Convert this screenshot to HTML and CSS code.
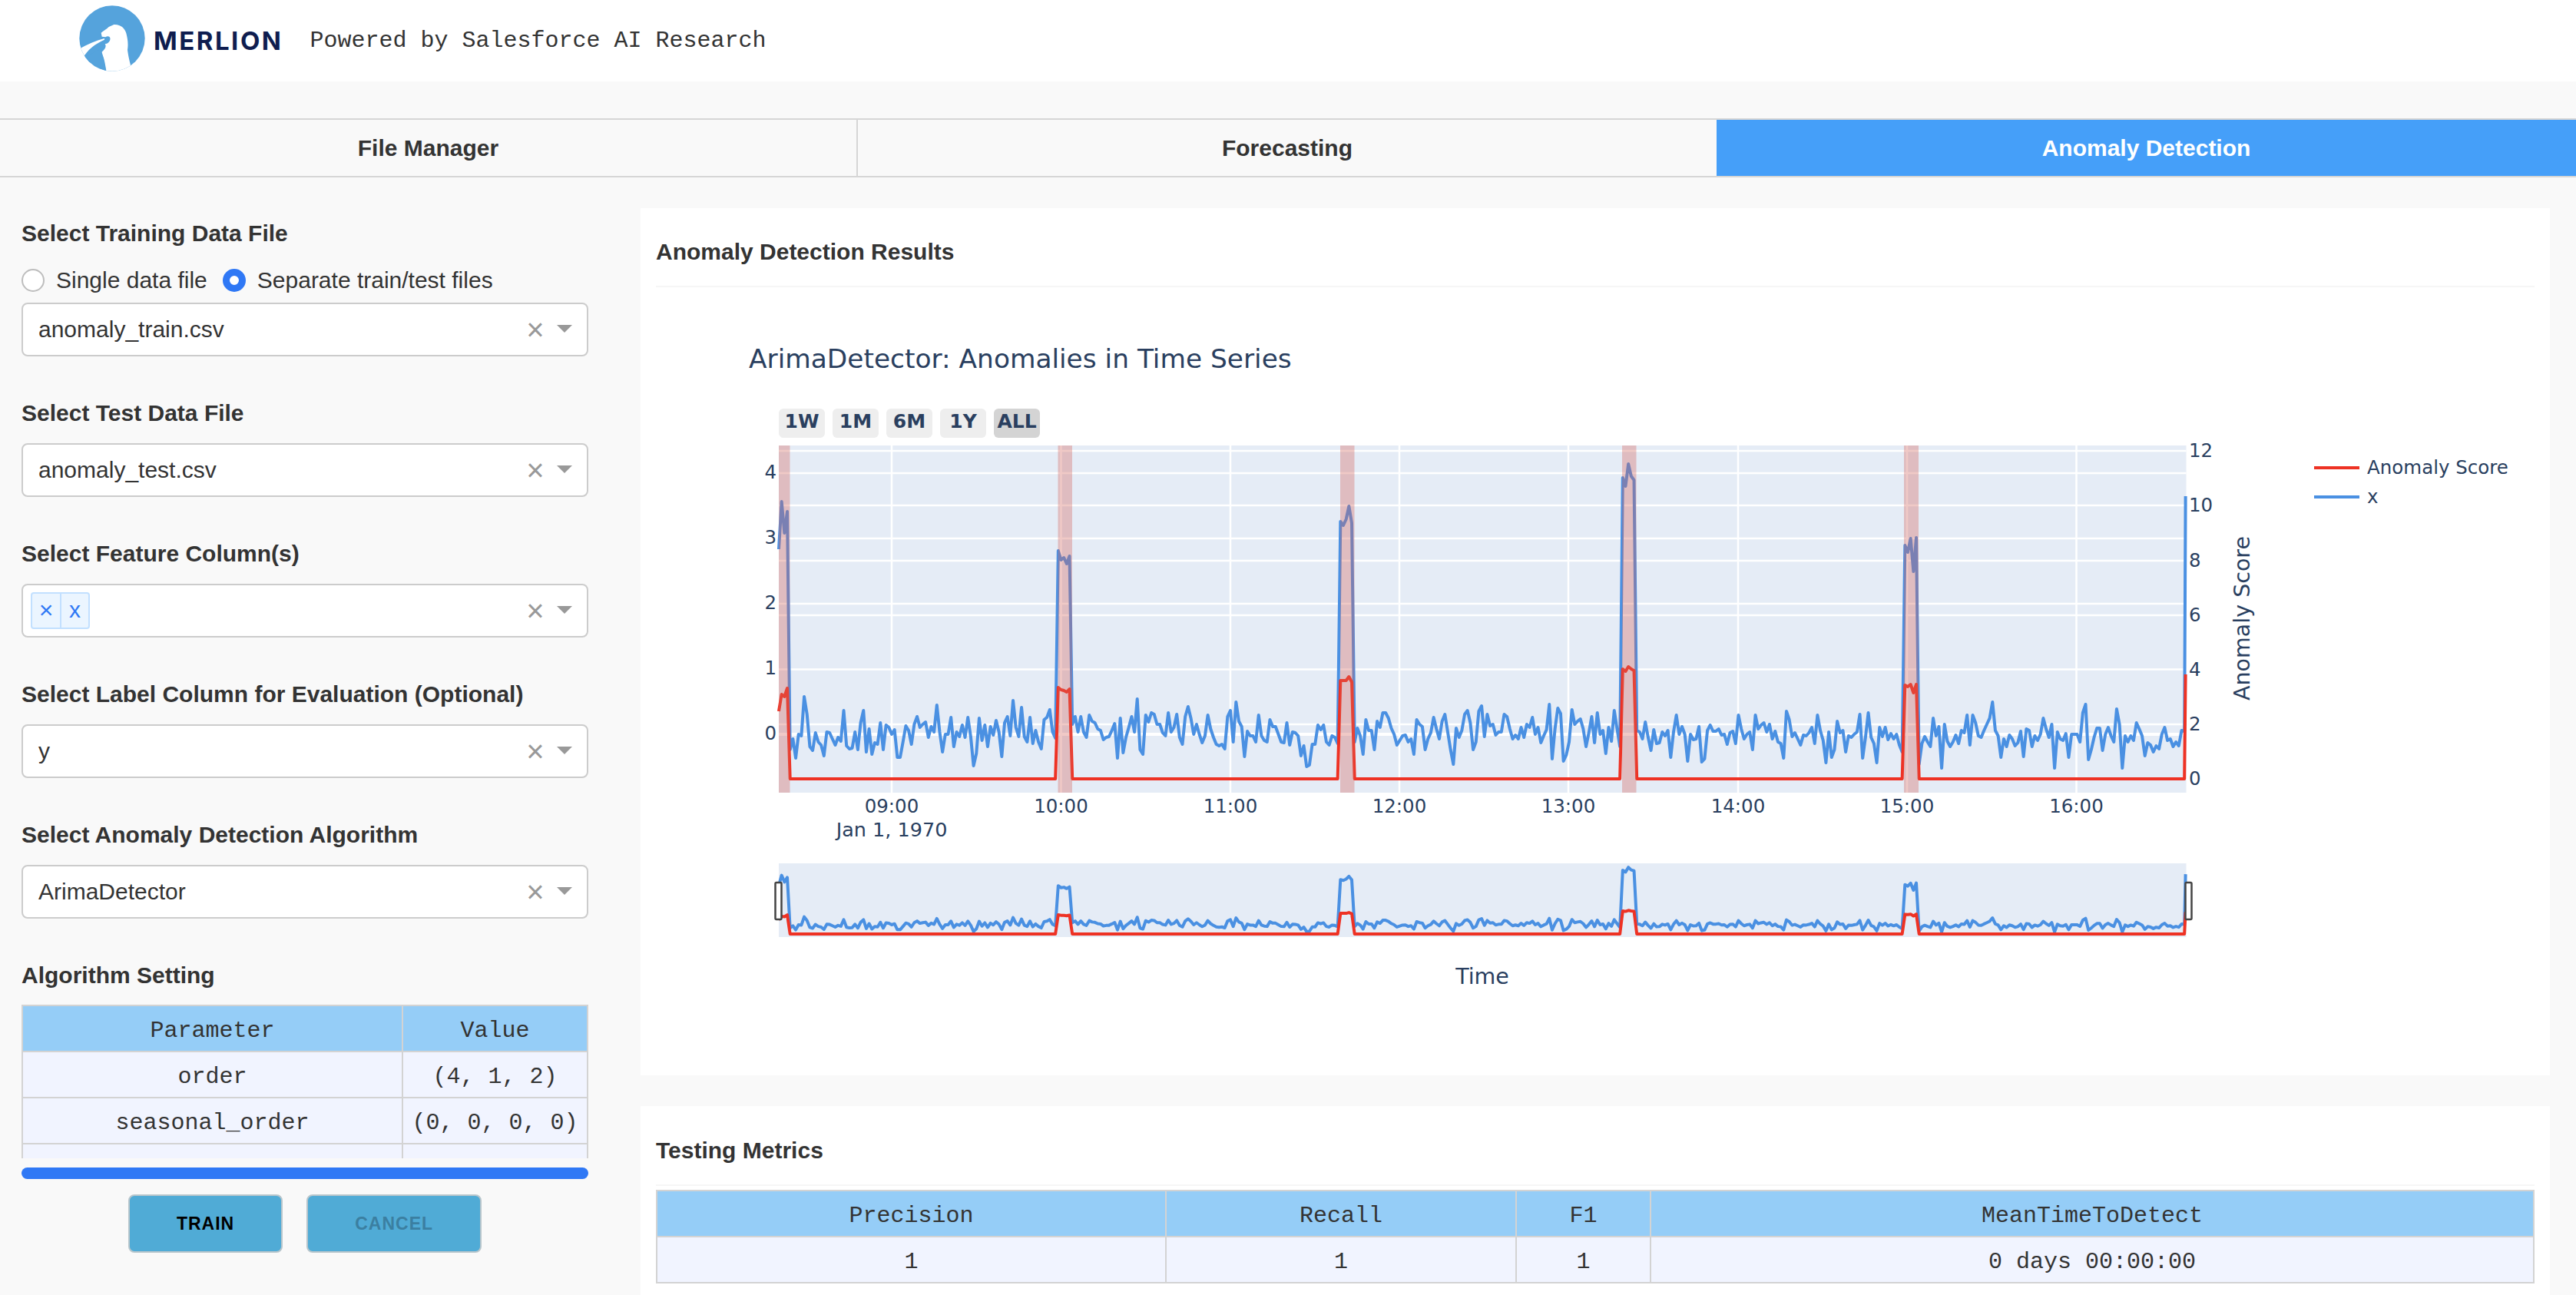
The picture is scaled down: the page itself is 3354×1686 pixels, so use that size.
FILE: index.html
```html
<!DOCTYPE html>
<html lang="en">
<head>
<meta charset="utf-8">
<title>Merlion</title>
<link rel="stylesheet" href="styles.css">
</head>
<body>
<header class="banner">
  <svg class="logo-mark" viewBox="60 15 276 270" aria-hidden="true">
    <defs><clipPath id="disc"><circle cx="198" cy="150" r="128"/></clipPath></defs>
    <circle cx="198" cy="150" r="128" fill="#55a3dc"/>
    <g clip-path="url(#disc)" fill="#fff">
      <path d="M205 96C230 94 248 110 253 130C258 150 262 170 258 195C262 225 268 245 272 262L280 300H172L175 275C170 250 168 225 155 205C168 195 178 182 170 172C185 170 192 158 190 148C188 140 178 140 172 145L158 143L155 128C165 120 175 115 185 105Z"/>
      <path d="M168 150C130 160 95 175 60 197L84 228C100 195 130 172 168 155Z"/>
      <path d="M155 190L84 228L175 280Z" fill="#55a3dc"/>
    </g>
  </svg>
  <span class="logo-word">MERLION</span>
  <span class="tagline">Powered by Salesforce AI Research</span>
</header>

<nav class="tabs">
  <div class="tab tab-first">File Manager</div>
  <div class="tab tab-mid">Forecasting</div>
  <div class="tab tab-active">Anomaly Detection</div>
</nav>

<main class="layout">
  <aside class="controls">
    <section class="group">
      <h3 class="label label-tight">Select Training Data File</h3>
      <div class="radios">
        <span class="radio"></span><span class="radio-text">Single data file</span>
        <span class="radio radio-on"></span><span class="radio-text">Separate train/test files</span>
      </div>
      <div class="select"><span class="select-value">anomaly_train.csv</span><span class="clear">×</span><span class="arrow"></span></div>
    </section>
    <section class="group">
      <h3 class="label">Select Test Data File</h3>
      <div class="select"><span class="select-value">anomaly_test.csv</span><span class="clear">×</span><span class="arrow"></span></div>
    </section>
    <section class="group">
      <h3 class="label">Select Feature Column(s)</h3>
      <div class="select select-multi">
        <span class="chip"><span class="chip-x">×</span><span class="chip-text">x</span></span>
        <span class="select-value"></span><span class="clear">×</span><span class="arrow"></span>
      </div>
    </section>
    <section class="group">
      <h3 class="label">Select Label Column for Evaluation (Optional)</h3>
      <div class="select"><span class="select-value">y</span><span class="clear">×</span><span class="arrow"></span></div>
    </section>
    <section class="group">
      <h3 class="label">Select Anomaly Detection Algorithm</h3>
      <div class="select"><span class="select-value">ArimaDetector</span><span class="clear">×</span><span class="arrow"></span></div>
    </section>
    <section class="group">
      <h3 class="label label-table">Algorithm Setting</h3>
      <div class="param-scroll">
        <table class="data-table param-table">
          <colgroup><col class="col-param"><col></colgroup>
          <thead><tr><th>Parameter</th><th>Value</th></tr></thead>
          <tbody>
            <tr><td>order</td><td>(4, 1, 2)</td></tr>
            <tr><td>seasonal_order</td><td>(0, 0, 0, 0)</td></tr>
            <tr><td>&nbsp;</td><td>&nbsp;</td></tr>
          </tbody>
        </table>
      </div>
      <div class="progress"></div>
      <div class="actions">
        <button class="btn" type="button">TRAIN</button>
        <button class="btn btn-muted" type="button">CANCEL</button>
      </div>
    </section>
  </aside>

  <div class="results">
    <section class="card card-chart">
      <h3 class="card-title">Anomaly Detection Results</h3>
      <hr class="rule">
      <svg class="chart" viewBox="854 373 2446 1026" role="img" aria-label="Anomalies in time series chart">
        <defs>
          <polyline id="series-x" class="trace" points="0,714 1,652 2,693 3,665 4,975 5,961 6,986 7,955 8,957 9,906 10,929 11,971 12,976 13,953 14,965 15,969 16,983 17,952 18,953 19,961 20,969 21,959 22,964 23,924 24,970 25,974 26,973 27,952 28,975 29,940 30,924 31,978 32,948 33,981 34,966 35,968 36,940 37,975 38,943 39,946 40,955 41,949 42,985 43,985 44,965 45,944 46,950 47,968 48,942 49,932 50,946 51,942 52,939 53,959 54,945 55,952 56,917 57,952 58,978 59,955 60,955 61,933 62,971 63,952 64,958 65,943 66,959 67,933 68,958 69,996 70,980 71,934 72,963 73,943 74,971 75,945 76,956 77,937 78,952 79,984 80,940 81,932 82,957 83,911 84,946 85,958 86,920 87,958 88,965 89,933 90,967 91,950 92,965 93,974 94,936 95,933 96,923 97,952 98,960 99,716 100,728 101,725 102,733 103,723 104,942 105,932 106,952 107,932 108,952 109,959 110,930 111,938 112,940 113,948 114,950 115,962 116,959 117,958 118,950 119,941 120,986 121,934 122,979 123,959 124,946 125,932 126,952 127,909 128,975 129,981 130,930 131,939 132,927 133,929 134,942 135,942 136,953 137,957 138,927 139,952 140,946 141,929 142,959 143,968 144,932 145,919 146,934 147,955 148,942 149,955 150,966 151,957 152,930 153,948 154,959 155,968 156,970 157,968 158,974 159,932 160,924 161,965 162,913 163,938 164,945 165,984 166,951 167,957 168,957 169,965 170,930 171,957 172,963 173,965 174,936 175,945 176,945 177,955 178,965 179,966 180,940 181,969 182,952 183,953 184,957 185,983 186,970 187,997 188,995 189,968 190,968 191,943 192,949 193,943 194,965 195,969 196,957 197,959 198,967 199,678 200,683 201,675 202,658 203,680 204,965 205,947 206,957 207,981 208,936 209,950 210,950 211,975 212,938 213,946 214,927 215,927 216,934 217,947 218,955 219,969 220,963 221,957 222,956 223,965 224,961 225,981 226,936 227,942 228,945 229,975 230,961 231,953 232,933 233,948 234,961 235,938 236,929 237,952 238,975 239,994 240,947 241,959 242,950 243,929 244,924 245,940 246,975 247,965 248,925 249,918 250,958 251,929 252,944 253,942 254,956 255,952 256,952 257,929 258,932 259,948 260,961 261,956 262,961 263,946 264,959 265,942 266,946 267,933 268,955 269,946 270,966 271,957 272,949 273,916 274,987 275,948 276,921 277,928 278,990 279,982 280,965 281,923 282,942 283,938 284,935 285,948 286,971 287,953 288,932 289,966 290,927 291,955 292,950 293,980 294,946 295,964 296,924 297,948 298,971 299,621 300,632 301,603 302,619 303,624 304,950 305,952 306,961 307,939 308,959 309,976 310,949 311,967 312,966 313,952 314,957 315,950 316,985 317,952 318,930 319,955 320,945 321,955 322,990 323,955 324,962 325,961 326,945 327,991 328,987 329,950 330,943 331,951 332,951 333,948 334,956 335,955 336,968 337,953 338,951 339,967 340,930 341,948 342,961 343,955 344,952 345,975 346,930 347,948 348,943 349,940 350,952 351,942 352,961 353,951 354,965 355,967 356,986 357,925 358,936 359,958 360,953 361,961 362,969 363,956 364,957 365,953 366,946 367,967 368,930 369,950 370,963 371,992 372,952 373,985 374,975 375,938 376,953 377,950 378,978 379,957 380,959 381,955 382,952 383,929 384,986 385,959 386,927 387,959 388,967 389,992 390,946 391,958 392,946 393,962 394,954 395,961 396,955 397,969 398,978 399,709 400,718 401,700 402,743 403,699 404,994 405,967 406,958 407,965 408,971 409,934 410,957 411,945 412,999 413,942 414,964 415,971 416,965 417,956 418,967 419,950 420,953 421,930 422,969 423,930 424,940 425,957 426,959 427,950 428,942 429,934 430,913 431,950 432,957 433,985 434,961 435,971 436,956 437,961 438,970 439,966 440,951 441,984 442,948 443,950 444,971 445,957 446,963 447,955 448,934 449,948 450,959 451,942 452,999 453,952 454,961 455,963 456,954 457,985 458,955 459,955 460,955 461,965 462,927 463,916 464,988 465,975 466,959 467,947 468,947 469,976 470,955 471,946 472,957 473,965 474,922 475,942 476,999 477,957 478,965 479,957 480,963 481,940 482,948 483,957 484,983 485,966 486,969 487,978 488,970 489,974 490,955 491,946 492,963 493,961 494,971 495,965 496,970 497,950 498,951 498.4,645"/>
          <polyline id="series-score" class="trace" points="0,925 1,903 2,906 3,895 4,1013 98,1013 99,894 100,897 101,898 102,900 103,896 104,1013 198,1013 199,885 200,885 201,885 202,880 203,887 204,1013 298,1013 299,870 300,873 301,867 302,870 303,872 304,1013 398,1013 399,891 400,893 401,890 402,901 403,890 404,1013 498,1013 498.4,877"/>
        </defs>

        <text class="chart-title" x="975" y="478">ArimaDetector: Anomalies in Time Series</text>

        <g class="range-buttons">
          <rect class="range-btn" x="1014" y="531" width="60" height="38" rx="6"/><text class="range-label" x="1044" y="556">1W</text>
          <rect class="range-btn" x="1084" y="531" width="60" height="38" rx="6"/><text class="range-label" x="1114" y="556">1M</text>
          <rect class="range-btn" x="1154" y="531" width="60" height="38" rx="6"/><text class="range-label" x="1184" y="556">6M</text>
          <rect class="range-btn" x="1224" y="531" width="60" height="38" rx="6"/><text class="range-label" x="1254" y="556">1Y</text>
          <rect class="range-btn range-btn-on" x="1294" y="531" width="60" height="38" rx="6"/><text class="range-label" x="1324" y="556">ALL</text>
        </g>

        <rect class="plot-bg" x="1014" y="579" width="1832.5" height="452"/>
        <path class="grid" d="M1161 579V1031M1381.5 579V1031M1602 579V1031M1822 579V1031M2042 579V1031M2263 579V1031M2483 579V1031M2703.5 579V1031"/>
        <path class="grid" d="M1014 586H2846.5M1014 615H2846.5M1014 657H2846.5M1014 700H2846.5M1014 729H2846.5M1014 785H2846.5M1014 800H2846.5M1014 870.500H2846.5M1014 942H2846.5"/>
        <path class="grid-zero" d="M1014 955H2846.5"/>

        <use href="#series-x" class="stroke-x" transform="translate(1014 0) scale(3.675 1)"/>
        <use href="#series-score" class="stroke-score" transform="translate(1014 0) scale(3.675 1)"/>

        <rect class="band" x="1014" y="579" width="14.500" height="452"/>
        <rect class="band" x="1377.500" y="579" width="18.500" height="452"/>
        <rect class="band" x="1745" y="579" width="18.500" height="452"/>
        <rect class="band" x="2112" y="579" width="18.500" height="452"/>
        <rect class="band" x="2479" y="579" width="19" height="452"/>

        <g class="tick tick-end">
          <text x="1011" y="622">4</text><text x="1011" y="707">3</text><text x="1011" y="792">2</text><text x="1011" y="877">1</text><text x="1011" y="962">0</text>
        </g>
        <g class="tick">
          <text x="2850" y="594">12</text><text x="2850" y="665">10</text><text x="2850" y="737">8</text><text x="2850" y="808">6</text><text x="2850" y="879">4</text><text x="2850" y="950">2</text><text x="2850" y="1021">0</text>
        </g>
        <g class="tick tick-mid">
          <text x="1161" y="1057">09:00</text><text class="tick-date" x="1161" y="1088">Jan 1, 1970</text>
          <text x="1381.500" y="1057">10:00</text><text x="1602" y="1057">11:00</text><text x="1822" y="1057">12:00</text><text x="2042" y="1057">13:00</text><text x="2263" y="1057">14:00</text><text x="2483" y="1057">15:00</text><text x="2703.500" y="1057">16:00</text>
        </g>

        <text class="axis-title" transform="translate(2929 804) rotate(-90)">Anomaly Score</text>
        <text class="axis-title" x="1930" y="1280">Time</text>

        <path class="legend-score" d="M3013 608H3072"/>
        <path class="legend-x" d="M3013 646H3072"/>
        <text class="tick" x="3082" y="616">Anomaly Score</text>
        <text class="tick" x="3082" y="654">x</text>

        <rect class="plot-bg" x="1014" y="1123" width="1832.5" height="96"/>
        <use href="#series-x" class="stroke-x" transform="translate(1014 1000.06) scale(3.675 .2125)"/>
        <use href="#series-score" class="stroke-score" transform="translate(1014 1002.27) scale(3.675 .21)"/>
        <rect class="grip" x="1009.500" y="1148" width="8" height="48" rx="1.500"/>
        <rect class="grip" x="2845.500" y="1148" width="8" height="48" rx="1.500"/>
      </svg>
    </section>

    <section class="card card-metrics">
      <h3 class="card-title card-title-metrics">Testing Metrics</h3>
      <hr class="rule rule-table">
      <table class="data-table metrics-table">
        <colgroup><col class="col-a"><col class="col-b"><col class="col-c"><col></colgroup>
        <thead><tr><th>Precision</th><th>Recall</th><th>F1</th><th>MeanTimeToDetect</th></tr></thead>
        <tbody><tr><td>1</td><td>1</td><td>1</td><td>0 days 00:00:00</td></tr></tbody>
      </table>
    </section>
  </div>
</main>
</body>
</html>
```
FILE: styles.css
```css
* { box-sizing: border-box; }
html, body { margin: 0; height: 100%; }
body {
  overflow: hidden;
  background: #f9f9f9;
  color: #333;
  font-family: "Liberation Sans", Arial, sans-serif;
}

.banner {
  display: flex;
  align-items: center;
  height: 106px;
  padding-left: 100px;
  background: #fff;
}
.logo-mark { display: block; width: 92px; height: 90px; margin-top: -6px; }
.logo-word {
  margin-left: 8px;
  font-family: Inter, "Liberation Sans", sans-serif;
  font-size: 33px;
  font-weight: 700;
  letter-spacing: 2.500px;
  color: #0f1d4f;
}
.tagline {
  margin-left: 35px;
  font-family: "Liberation Mono", monospace;
  font-size: 30px;
  color: #333;
}

.tabs {
  display: flex;
  height: 77px;
  margin-top: 48px;
  border-top: 2px solid #d6d6d6;
  border-bottom: 2px solid #d6d6d6;
}
.tab {
  display: flex;
  align-items: center;
  justify-content: center;
  font-size: 30px;
  font-weight: 700;
  color: #333;
}
.tab-first { flex: 0 0 1115px; }
.tab-mid { flex: 0 0 1120px; border-left: 2px solid #d6d6d6; }
.tab-active { flex: 1 1 0; background: #459ff9; color: #fff; }

.layout { display: flex; align-items: flex-start; }
.controls {
  flex: 0 0 834px;
  display: flex;
  flex-direction: column;
  gap: 54px;
  padding: 53px 68px 0 28px;
}
.label {
  margin: 0 0 19px;
  font-size: 30px;
  line-height: 40px;
  font-weight: 700;
  color: #333;
}
.label-tight { margin-bottom: 21px; }
.label-table { margin-bottom: 18px; }

.radios {
  display: flex;
  align-items: center;
  height: 40px;
  margin-bottom: 9px;
}
.radio {
  flex: none;
  width: 30px;
  height: 30px;
  border: 2px solid #bdbdbd;
  border-radius: 50%;
  background: #fff;
}
.radio-on { border: 9px solid #2f78f5; }
.radio-text { margin: 0 20px 0 15px; font-size: 30px; color: #333; }

.select {
  display: flex;
  align-items: center;
  height: 70px;
  padding: 0 19px 0 20px;
  background: #fff;
  border: 2px solid #ccc;
  border-radius: 8px;
}
.select-multi { padding-left: 10px; }
.select-value { flex: 1; font-size: 30px; color: #333; }
.clear { width: 30px; text-align: center; font-size: 40px; line-height: 1; color: #999; }
.arrow {
  width: 0;
  height: 0;
  margin: 0 0 2px 13px;
  border-style: solid;
  border-width: 10px 10px 0;
  border-color: #999 transparent transparent;
}
.chip {
  display: flex;
  height: 48px;
  color: #2f78f5;
  background: #ebf5ff;
  border: 2px solid #c2e0ff;
  border-radius: 4px;
  font-size: 28px;
  line-height: 42px;
}
.chip-x { width: 38px; text-align: center; border-right: 2px solid #c2e0ff; font-size: 32px; }
.chip-text { width: 35px; text-align: center; font-size: 30px; }

.param-scroll { height: 200px; overflow: hidden; }
.data-table {
  width: 100%;
  table-layout: fixed;
  border-collapse: collapse;
  font-family: "Liberation Mono", monospace;
  font-size: 30px;
  color: #333;
  text-align: center;
}
.data-table th, .data-table td {
  height: 60px;
  padding: 6px 0 0;
  font-weight: 400;
  border: 2px solid #d3d3d3;
}
.data-table th { background: #95cdf7; }
.data-table td { background: #f1f4ff; }
.col-param { width: 495px; }

.progress {
  height: 15px;
  margin-top: 12px;
  background: #2f78f5;
  border-radius: 8px;
}
.actions {
  display: flex;
  justify-content: center;
  gap: 31px;
  margin-top: 20px;
}
.btn {
  height: 76px;
  padding: 0 61px;
  background: #50abd6;
  border: 2px solid #b9c6cc;
  border-radius: 8px;
  font-family: "Liberation Sans", sans-serif;
  font-size: 23px;
  font-weight: 700;
  letter-spacing: 1px;
  color: #000;
}
.btn-muted { color: #3b7fa1; }

.results {
  flex: 0 0 2486px;
  display: flex;
  flex-direction: column;
  gap: 40px;
  padding-top: 40px;
}
.card { background: #fff; padding: 0 20px; }
.card-chart { height: 1129px; }
.card-metrics { height: 300px; }
.card-title {
  margin: 0;
  padding-top: 37px;
  font-size: 30px;
  line-height: 40px;
  font-weight: 700;
  color: #333;
}
.card-title-metrics { padding-top: 38px; }
.rule {
  height: 2px;
  margin: 24px 0 0;
  border: 0;
  background: #f6f6f6;
}
.rule-table { margin-bottom: 5px; }
.chart { display: block; width: 2446px; height: 1026px; }

.metrics-table { width: 2446px; }
.col-a { width: 663px; }
.col-b { width: 456px; }
.col-c { width: 175px; }

.chart-title { font-family: "DejaVu Sans", sans-serif; font-size: 34.4px; fill: #2a3f5f; }
.range-btn { fill: #eee; }
.range-btn-on { fill: #d4d4d4; }
.range-label {
  font-family: "DejaVu Sans", sans-serif;
  font-size: 25px;
  font-weight: 700;
  fill: #2a3f5f;
  text-anchor: middle;
}
.plot-bg { fill: #e5ecf6; }
.grid { fill: none; stroke: #fff; stroke-width: 2.5; }
.grid-zero { fill: none; stroke: #fff; stroke-width: 4; }
.trace {
  fill: none;
  stroke-width: 4px;
  stroke-linejoin: round;
  vector-effect: non-scaling-stroke;
}
.stroke-x { stroke: #4a90e2; }
.stroke-score { stroke: #ee3224; }
.band { fill: rgb(212, 99, 92); fill-opacity: .35; }
.tick { font-family: "DejaVu Sans", sans-serif; font-size: 24.500px; fill: #2a3f5f; }
.tick-date { font-size: 25.500px; }
.tick-end { text-anchor: end; }
.tick-mid { text-anchor: middle; }
.axis-title {
  font-family: "DejaVu Sans", sans-serif;
  font-size: 28.500px;
  fill: #2a3f5f;
  text-anchor: middle;
}
.legend-score { stroke: #ee3224; stroke-width: 4; }
.legend-x { stroke: #4a90e2; stroke-width: 4; }
.grip { fill: #fff; stroke: #444; stroke-width: 2.5; }
```
